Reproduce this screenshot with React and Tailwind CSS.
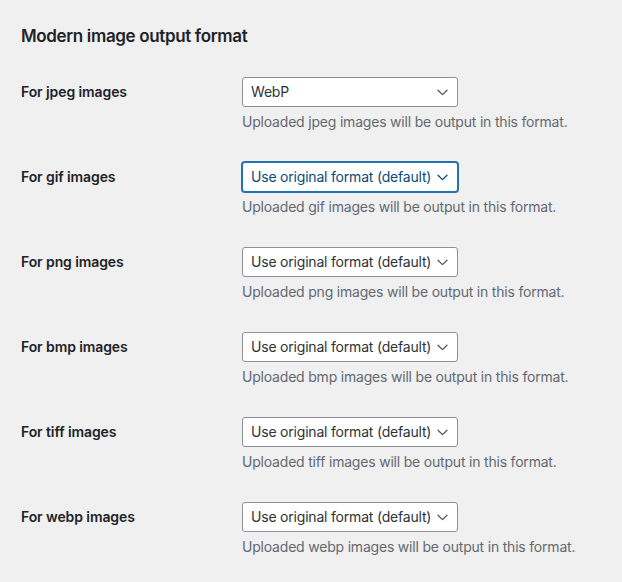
import React from "react";

const rows = [
  { k: "jpeg", v: "WebP" },
  { k: "gif", v: "Use original format (default)", focus: true },
  { k: "png", v: "Use original format (default)" },
  { k: "bmp", v: "Use original format (default)" },
  { k: "tiff", v: "Use original format (default)" },
  { k: "webp", v: "Use original format (default)" },
];

function Chevron({ color }) {
  return (
    <svg width="11" height="7" viewBox="0 0 11 7" className="shrink-0">
      <polyline points="1,1.3 5.5,5.6 10,1.3" fill="none" stroke={color} strokeWidth="1.3" strokeLinecap="round" strokeLinejoin="round" />
    </svg>
  );
}

export default function App() {
  return (
    <div className="min-h-[582px] w-[622px] bg-[#f0f0f1] pl-[21px] pt-[24px] text-[14px] text-[#1d2327]" style={{ fontFamily: "Inter, 'Noto Sans', sans-serif" }}>
      <h2 className="text-[17px] font-semibold leading-[24px] tracking-[-0.35px]">Modern image output format</h2>
      <div className="mt-[14px]">
        {rows.map((r) => (
          <div key={r.k} className="flex h-[85px]">
            <div className="w-[221px] shrink-0 pt-[21px] font-semibold leading-[18px] tracking-[-0.1px]">For {r.k} images</div>
            <div className="pt-[15px] tracking-[-0.2px]">
              <div
                className={
                  "flex h-[30px] w-[216px] items-center justify-between rounded-[3px] bg-white pl-[8px] pr-[9px] " +
                  (r.focus
                    ? "border border-[#2271b1] shadow-[0_0_0_1px_#2271b1] text-[#0a4b78]"
                    : "border border-[#8c8f94] text-[#2c3338]")
                }
              >
                <span className="whitespace-nowrap leading-[20px]">{r.v}</span>
                <Chevron color={r.focus ? "#0a4b78" : "#50575e"} />
              </div>
              <p className="mt-[4px] whitespace-nowrap leading-[21px] text-[#646970]">
                Uploaded {r.k} images will be output in this format.
              </p>
            </div>
          </div>
        ))}
      </div>
    </div>
  );
}
